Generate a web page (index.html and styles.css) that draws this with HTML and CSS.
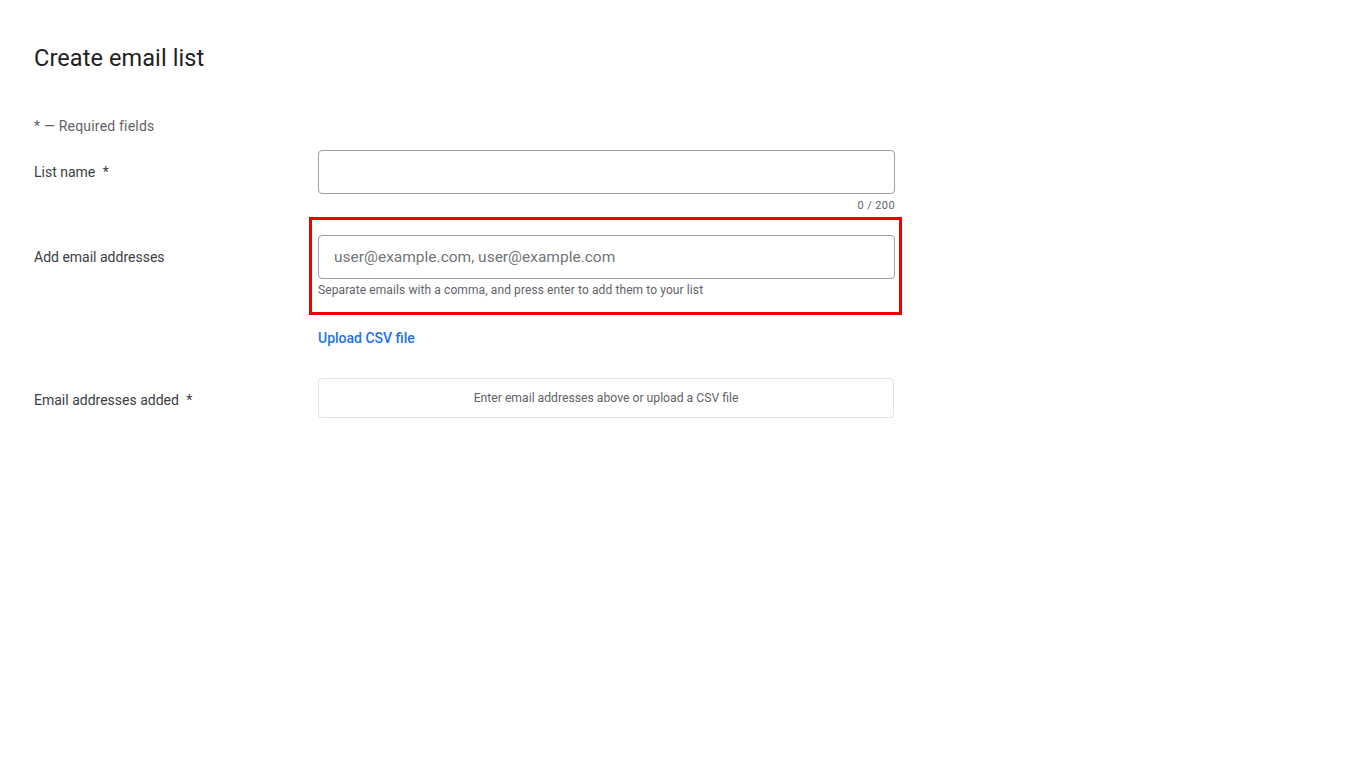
FILE: index.html
```html
<!DOCTYPE html>
<html lang="en">
<head>
<meta charset="utf-8">
<title>Create email list</title>
<link rel="stylesheet" href="styles.css">
</head>
<body>
<main class="page">
  <h1 class="title">Create email list</h1>
  <p class="required-note">* — Required fields</p>

  <div class="row row-name">
    <label class="label" for="listname">List name <span class="star">*</span></label>
    <div class="field">
      <input id="listname" class="input" type="text">
      <div class="counter">0 / 200</div>
    </div>
  </div>

  <div class="row row-emails">
    <label class="label" for="emails">Add email addresses</label>
    <div class="field field-emails">
      <input id="emails" class="input input-emails" type="text" placeholder="user@example.com, user@example.com">
      <div class="helper">Separate emails with a comma, and press enter to add them to your list</div>
      <div class="highlight"></div>
    </div>
  </div>

  <div class="row row-upload">
    <div></div>
    <div class="field">
      <a class="upload-link" href="#">Upload CSV file</a>
    </div>
  </div>

  <div class="row row-added">
    <div class="label">Email addresses added <span class="star">*</span></div>
    <div class="field">
      <div class="empty-box">Enter email addresses above or upload a CSV file</div>
    </div>
  </div>
</main>
</body>
</html>
```
FILE: styles.css
```css
* { box-sizing: border-box; }
html, body { margin: 0; padding: 0; background: #ffffff; }
body {
  font-family: Roboto, "Open Sans", Arial, sans-serif;
  color: #3c4043;
}
.page {
  padding: 44px 0 0 34px;
}
.title {
  margin: 0;
  font-size: 23.5px;
  line-height: 28px;
  font-weight: 400;
  color: #202124;
  letter-spacing: 0.1px;
}
.required-note {
  margin: 44px 0 0 0;
  font-size: 14px;
  line-height: 20px;
  color: #5f6368;
  letter-spacing: 0.2px;
}
.row {
  display: grid;
  grid-template-columns: 284px 577px;
}
.row-name { margin-top: 14px; }
.row-emails { margin-top: 21px; }
.row-upload { margin-top: 30px; }
.row-added { margin-top: 30px; }
.label {
  font-size: 14px;
  line-height: 20px;
  color: #3c4043;
  padding-top: 12px;
}
.star { margin-left: 4px; }
.field { position: relative; }
.input {
  display: block;
  width: 577px;
  height: 44px;
  border: 1px solid #9aa0a6;
  border-radius: 4px;
  padding: 0 15px;
  font-family: Roboto, Arial, sans-serif;
  font-size: 15.5px;
  color: #202124;
  background: #fff;
  outline: none;
}
.input::placeholder { color: #70757a; }
.counter {
  margin-top: 4px;
  text-align: right;
  font-size: 11px;
  line-height: 16px;
  color: #5f6368;
  letter-spacing: 0.4px;
}
.helper {
  margin-top: 3px;
  font-size: 12px;
  line-height: 16px;
  color: #5f6368;
  letter-spacing: 0.1px;
}
.highlight {
  position: absolute;
  left: -9px;
  top: -18px;
  width: 593px;
  height: 98px;
  border: 3px solid #ee0000;
  pointer-events: none;
}
.upload-link {
  display: inline-block;
  font-size: 14px;
  line-height: 20px;
  font-weight: 500;
  color: #1a73e8;
  text-decoration: none;
}
.empty-box {
  width: 576px;
  height: 40px;
  border: 1px solid #e0e2e5;
  border-radius: 4px;
  box-shadow: 0 1px 2px rgba(60,64,67,0.06);
  display: flex;
  align-items: center;
  justify-content: center;
  font-size: 12.2px;
  color: #5f6368;
}
```
